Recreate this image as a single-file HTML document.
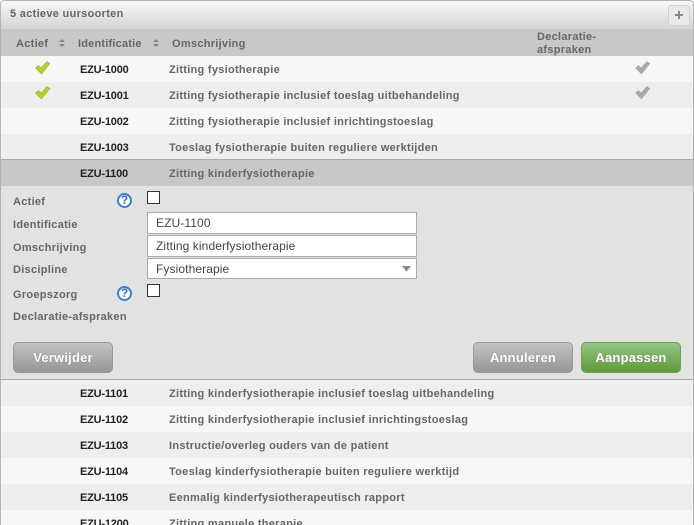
<!DOCTYPE html>
<html><head><meta charset="utf-8">
<style>
html,body{margin:0;padding:0;width:694px;height:525px;overflow:hidden;background:#fff;font-family:"Liberation Sans",Arial,sans-serif}
#wrap{position:absolute;left:0;top:0;width:694px;height:525px;overflow:hidden;background:#f7f7f7;border:1px solid #b4b4b8;border-bottom:0;border-radius:4px 4px 0 0;box-sizing:border-box}
.t{position:absolute;white-space:nowrap;font-size:11px;font-weight:bold;color:#666;letter-spacing:.28px;line-height:13px}
.row{position:absolute;left:0;right:0;height:26px}
.odd{background:#f7f7f7}.even{background:#eeeeee}
.id{left:79px;top:8px;color:#222;letter-spacing:-.2px}
.ds{left:168px;top:8px}
.inp{position:absolute;left:146px;width:270px;height:22px;background:#fff;border:1px solid #a9a9a9;font-size:12px;color:#444;line-height:20px;padding-left:8px;box-sizing:border-box;letter-spacing:.1px}
.cb{position:absolute;left:146px;width:13px;height:13px;background:#fff;border:1px solid #333;box-sizing:border-box}
.help{position:absolute;left:116px;width:15px;height:15px;border:2px solid #3c7fd2;border-radius:50%;box-sizing:border-box;background:#fff;color:#2d70c4;font-size:12px;font-weight:bold;text-align:center;line-height:11px}
.btn{position:absolute;top:341px;width:100px;height:31px;border:1px solid #999;border-radius:5px;background:linear-gradient(#c2c2c2,#969696);color:#fff;font-size:13px;font-weight:bold;text-align:center;line-height:29px;box-sizing:border-box;letter-spacing:.2px;text-shadow:0 0 1px #777}
.sort{position:absolute;width:6px;height:8px}
</style></head><body>
<div id="wrap">
<div style="position:absolute;left:0;right:0;top:0;height:28px;background:linear-gradient(#f8f8f8,#d4d4d6)"></div>
<div class="t" style="left:9px;top:7px;letter-spacing:.3px">5 actieve uursoorten</div>
<div style="position:absolute;left:667px;top:4px;width:22px;height:21px;border:1px solid #d2d2d2;border-radius:3px;background:#e9e9e9;box-sizing:border-box"><div style="position:absolute;left:6px;top:8px;width:8px;height:2px;background:#888"></div><div style="position:absolute;left:9px;top:5px;width:2px;height:8px;background:#888"></div></div>

<div style="position:absolute;left:0;right:0;top:28px;height:27px;background:#c8c8c8"></div>
<div class="t" style="left:15px;top:37px">Actief</div>
<svg class="sort" style="left:58px;top:38px" viewBox="0 0 6 8"><path d="M3 0L6 3H0zM3 8L0 5H6z" fill="#858585"/></svg>
<div class="t" style="left:77px;top:37px;letter-spacing:.2px">Identificatie</div>
<svg class="sort" style="left:152px;top:38px" viewBox="0 0 6 8"><path d="M3 0L6 3H0zM3 8L0 5H6z" fill="#858585"/></svg>
<div class="t" style="left:171px;top:37px">Omschrijving</div>
<div class="t" style="left:536px;top:30px">Declaratie-<br>afspraken</div>

<div class="row odd" style="top:55px"><svg style="position:absolute;left:34px;top:5px" width="15" height="14" viewBox="0 0 15 14"><path d="M.5 7L3.500 4.500L6 7L12 .5L14.800 2.500L6.500 13Z" fill="#b2cf2a" stroke="#9cb525" stroke-width=".6"/></svg><div class="t id">EZU-1000</div><div class="t ds">Zitting fysiotherapie</div><svg style="position:absolute;left:634px;top:5px" width="15" height="14" viewBox="0 0 15 14"><path d="M.5 7L3.500 4.500L6 7L12 .5L14.800 2.500L6.500 13Z" fill="#a8a8a8" stroke="#b0b0b0" stroke-width=".6"/></svg></div>
<div class="row even" style="top:81px"><svg style="position:absolute;left:34px;top:4px" width="15" height="14" viewBox="0 0 15 14"><path d="M.5 7L3.500 4.500L6 7L12 .5L14.800 2.500L6.500 13Z" fill="#b2cf2a" stroke="#9cb525" stroke-width=".6"/></svg><div class="t id">EZU-1001</div><div class="t ds">Zitting fysiotherapie inclusief toeslag uitbehandeling</div><svg style="position:absolute;left:634px;top:4px" width="15" height="14" viewBox="0 0 15 14"><path d="M.5 7L3.500 4.500L6 7L12 .5L14.800 2.500L6.500 13Z" fill="#a8a8a8" stroke="#b0b0b0" stroke-width=".6"/></svg></div>
<div class="row odd" style="top:107px"><div class="t id">EZU-1002</div><div class="t ds">Zitting fysiotherapie inclusief inrichtingstoeslag</div></div>
<div class="row even" style="top:133px"><div class="t id">EZU-1003</div><div class="t ds">Toeslag fysiotherapie buiten reguliere werktijden</div></div>
<div class="row" style="top:158px;height:27px;background:#c8c8c8;border-top:1px solid #aaa;box-sizing:border-box"><div class="t id">EZU-1100</div><div class="t ds">Zitting kinderfysiotherapie</div></div>

<div style="position:absolute;left:0;right:0;top:185px;height:194px;background:#e2e2e2;border-bottom:1px solid #aaa;box-sizing:border-box"></div>
<div class="t" style="left:12px;top:195px">Actief</div>
<div class="help" style="top:192px">?</div>
<div class="cb" style="top:190px"></div>
<div class="t" style="left:12px;top:218px">Identificatie</div>
<div class="inp" style="top:211px">EZU-1100</div>
<div class="t" style="left:12px;top:241px">Omschrijving</div>
<div class="inp" style="top:234px">Zitting kinderfysiotherapie</div>
<div class="t" style="left:12px;top:263px">Discipline</div>
<div class="inp" style="top:257px;height:21px;line-height:20px">Fysiotherapie</div>
<svg style="position:absolute;left:401px;top:265px" width="9" height="6" viewBox="0 0 9 6"><path d="M0 0H9L4.500 5.500Z" fill="#888"/></svg>
<div class="t" style="left:12px;top:288px">Groepszorg</div>
<div class="help" style="top:285px">?</div>
<div class="cb" style="top:283px"></div>
<div class="t" style="left:12px;top:310px">Declaratie-afspraken</div>
<div class="btn" style="left:12px">Verwijder</div>
<div class="btn" style="left:472px">Annuleren</div>
<div class="btn" style="left:580px;background:linear-gradient(#93c486,#5f9a35);border-color:#6da24c">Aanpassen</div>

<div class="row even" style="top:379px"><div class="t id">EZU-1101</div><div class="t ds">Zitting kinderfysiotherapie inclusief toeslag uitbehandeling</div></div>
<div class="row odd" style="top:405px"><div class="t id">EZU-1102</div><div class="t ds">Zitting kinderfysiotherapie inclusief inrichtingstoeslag</div></div>
<div class="row even" style="top:431px"><div class="t id">EZU-1103</div><div class="t ds">Instructie/overleg ouders van de patient</div></div>
<div class="row odd" style="top:457px"><div class="t id">EZU-1104</div><div class="t ds">Toeslag kinderfysiotherapie buiten reguliere werktijd</div></div>
<div class="row even" style="top:483px"><div class="t id">EZU-1105</div><div class="t ds">Eenmalig kinderfysiotherapeutisch rapport</div></div>
<div class="row odd" style="top:509px"><div class="t id">EZU-1200</div><div class="t ds">Zitting manuele therapie</div></div>
</div>
</body></html>
